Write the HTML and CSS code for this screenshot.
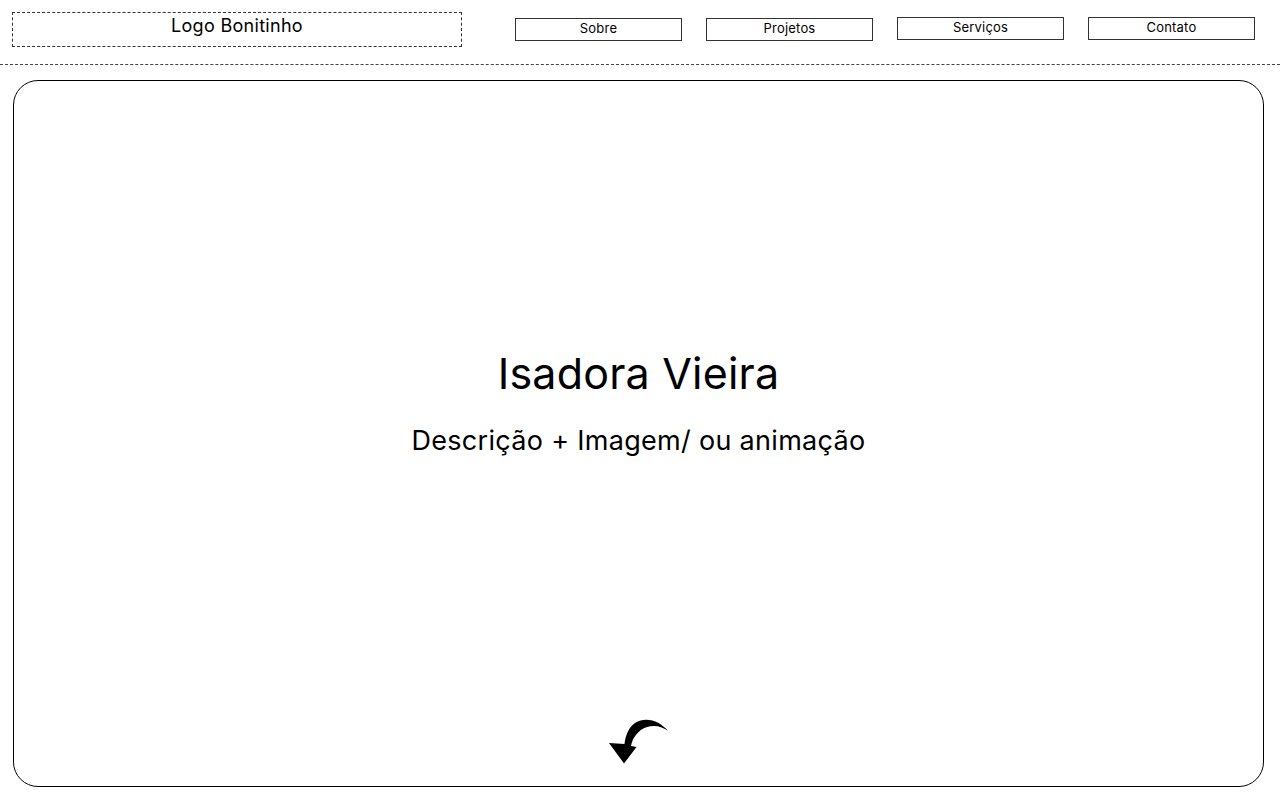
FILE: index.html
```html
<!DOCTYPE html>
<html lang="pt-BR">
<head>
<meta charset="utf-8">
<title>Isadora Vieira</title>
<link rel="stylesheet" href="styles.css">
</head>
<body>
<header class="topbar">
  <div class="logo">Logo Bonitinho</div>
  <nav class="nav">
    <a class="nav-btn" href="#sobre">Sobre</a>
    <a class="nav-btn" href="#projetos">Projetos</a>
    <a class="nav-btn nav-btn--up" href="#servicos">Serviços</a>
    <a class="nav-btn nav-btn--up" href="#contato">Contato</a>
  </nav>
</header>
<main class="hero">
  <h1 class="hero-title">Isadora Vieira</h1>
  <p class="hero-sub">Descrição + Imagem/ ou animação</p>
  <svg class="hero-arrow" width="60" height="48" viewBox="0 0 60 48" aria-hidden="true">
    <path d="M60 14 C52 4 38 -1 27 6 C21 10 17.5 18 16.5 27 L1 26 L16 46.5 L28.5 30 L23 29 C24.5 21 30 13 39 10 C47 7.5 55 10 60 14 Z" fill="#000"/>
  </svg>
</main>
</body>
</html>
```
FILE: styles.css
```css
* { box-sizing: border-box; }
html, body { margin: 0; padding: 0; background: #fff; }
body {
  font-family: Inter, "Open Sans", "Noto Sans", sans-serif;
  color: #000;
  width: 1280px;
  height: 800px;
  overflow: hidden;
}
.topbar {
  display: flex;
  align-items: flex-start;
  height: 65px;
  padding: 12px 25px 0 12px;
  border-bottom: 1px dashed #444;
}
.logo {
  width: 450px;
  height: 35px;
  border: 1px dashed #333;
  text-align: center;
  font-size: 18px;
  line-height: 26px;
  letter-spacing: 0.3px;
}
.nav {
  display: flex;
  gap: 24px;
  margin-left: 53px;
  margin-top: 6px;
}
.nav-btn {
  display: block;
  width: 167px;
  height: 23px;
  border: 1px solid #333;
  text-align: center;
  font-size: 13px;
  line-height: 19px;
  color: #000;
  text-decoration: none;
  letter-spacing: 0.2px;
}
.nav-btn--up { margin-top: -1px; }
.hero {
  display: flex;
  flex-direction: column;
  align-items: center;
  width: 1251px;
  height: 707px;
  margin: 15px 0 0 13px;
  border: 1px solid #000;
  border-radius: 25px;
  padding-top: 262px;
}
.hero-title {
  margin: 0;
  font-size: 43px;
  font-weight: 400;
  line-height: 60px;
  letter-spacing: 0.2px;
}
.hero-sub {
  margin: 20px 0 0;
  font-size: 27px;
  font-weight: 400;
  line-height: 36px;
  letter-spacing: 0.3px;
}
.hero-arrow {
  display: block;
  margin-top: auto;
  margin-bottom: 21px;
  margin-left: -2px;
}
```
